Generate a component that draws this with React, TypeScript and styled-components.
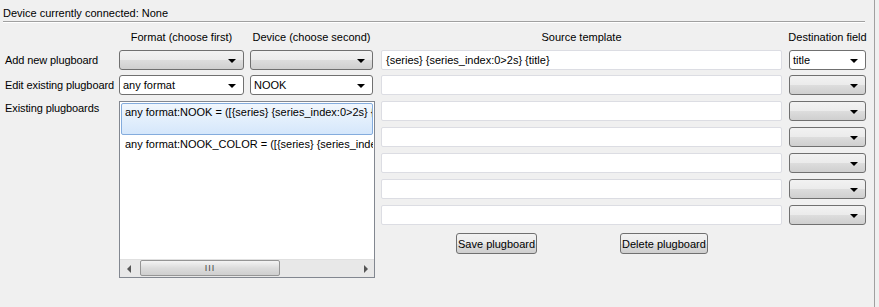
import styled, { createGlobalStyle } from "styled-components";

const GlobalStyle = createGlobalStyle`
  html, body {
    margin: 0;
    padding: 0;
    background: #f0f0f0;
  }
  body {
    font-family: "Liberation Sans", Arial, sans-serif;
    font-size: 11px;
    color: #000;
  }
`;

const Window = styled.div`
  width: 874px;
  height: 307px;
  border-right: 1px solid #a0a0a0;
  background: #f0f0f0;
  overflow: hidden;
`;

const Status = styled.div`
  padding: 6px 0 0 3px;
  height: 14px;
  line-height: 14px;
`;

const Rule = styled.div`
  margin: 1px 9px 0 3px;
  height: 0;
  border-top: 1px solid #a0a0a0;
  border-bottom: 1px solid #fff;
`;

const Grid = styled.div`
  display: grid;
  grid-template-columns: 114px 131px 131px 408px 77px;
  grid-template-rows: 23px 25px repeat(6, 26px) 28px;
  padding: 4px 0 0 5px;
`;

const Header = styled.div<{ $col: number }>`
  grid-column: ${(p) => p.$col};
  grid-row: 1;
  display: flex;
  align-items: center;
  justify-content: center;
  width: ${(p) => (p.$col === 4 ? 401 : p.$col === 2 ? 125 : p.$col === 3 ? 123 : 77)}px;
  padding-bottom: 4px;
  white-space: nowrap;
`;

const Label = styled.div<{ $row: number; $top?: boolean }>`
  grid-column: 1;
  grid-row: ${(p) => p.$row};
  line-height: ${(p) => (p.$top ? "14px" : "20px")};
  white-space: nowrap;
  letter-spacing: -0.1px;
`;

const Combo = styled.div<{ $w: number; $edit?: boolean }>`
  width: ${(p) => p.$w}px;
  height: 20px;
  box-sizing: border-box;
  border: 1px solid #707070;
  border-radius: 3px;
  background: ${(p) =>
    p.$edit ? "#fff" : "linear-gradient(#f2f2f2 0%, #ebebeb 50%, #dddddd 51%, #cfcfcf 100%)"};
  display: flex;
  align-items: center;
  padding-left: 3px;
  position: relative;
  &::after {
    content: "";
    position: absolute;
    right: 7px;
    top: 8px;
    border-left: 4px solid transparent;
    border-right: 4px solid transparent;
    border-top: 4px solid #000;
  }
`;

const Edit = styled.div`
  width: 401px;
  height: 20px;
  box-sizing: border-box;
  border: 1px solid #dcdde3;
  border-radius: 2px;
  background: #fff;
  display: flex;
  align-items: center;
  padding-left: 4px;
`;

const Cell = styled.div<{ $col: number; $row: number }>`
  grid-column: ${(p) => p.$col};
  grid-row: ${(p) => p.$row};
`;

const ListBox = styled.div`
  grid-column: 2 / span 2;
  grid-row: 4 / span 7;
  width: 256px;
  height: 177px;
  box-sizing: border-box;
  border: 1px solid #828790;
  background: #fff;
  display: flex;
  flex-direction: column;
`;

const Items = styled.div`
  flex: 1;
  padding: 1px;
  overflow: hidden;
`;

const Item = styled.div<{ $selected?: boolean }>`
  height: ${(p) => (p.$selected ? 32 : 18)}px;
  box-sizing: border-box;
  padding: ${(p) => (p.$selected ? "2px 3px" : "3px 4px")};
  white-space: nowrap;
  overflow: hidden;
  border: ${(p) => (p.$selected ? "1px solid #84acdd" : "none")};
  border-radius: 2px;
  background: ${(p) => (p.$selected ? "linear-gradient(#f1f7fd, #d5e7fb)" : "transparent")};
`;

const ScrollBar = styled.div`
  height: 17px;
  display: flex;
  align-items: stretch;
  background: #e8e8e8;
  border-top: 1px solid #e0e0e0;
`;

const Arrow = styled.div<{ $dir: "left" | "right" }>`
  width: 17px;
  display: flex;
  align-items: center;
  justify-content: center;
  &::before {
    content: "";
    border-top: 4px solid transparent;
    border-bottom: 4px solid transparent;
    ${(p) => (p.$dir === "left" ? "border-right: 4px solid #555;" : "border-left: 4px solid #555;")}
  }
`;

const Track = styled.div`
  flex: 1;
  display: flex;
  align-items: stretch;
  padding: 0 0 1px 3px;
`;

const Thumb = styled.div`
  width: 140px;
  box-sizing: border-box;
  border: 1px solid #959595;
  border-radius: 2px;
  background: linear-gradient(#f4f4f4, #dcdcdc 50%, #cfcfcf);
  display: flex;
  align-items: center;
  justify-content: center;
  font-size: 9px;
  letter-spacing: 1px;
  color: #444;
`;

const Buttons = styled.div`
  grid-column: 4;
  grid-row: 9;
  width: 401px;
  display: flex;
  padding: 2px 0 0 75px;
  gap: 83px;
`;

const Button = styled.button`
  height: 21px;
  box-sizing: border-box;
  padding: 0 1px;
  font: inherit;
  border: 1px solid #707070;
  border-radius: 3px;
  background: linear-gradient(#f2f2f2 0%, #ebebeb 50%, #dddddd 51%, #cfcfcf 100%);
  color: #000;
`;

const destinations = ["title", "", "", "", "", "", ""];

export default function App() {
  return (
    <Window>
      <GlobalStyle />
      <Status>Device currently connected: None</Status>
      <Rule />
      <Grid>
        <Header $col={2}>Format (choose first)</Header>
        <Header $col={3}>Device (choose second)</Header>
        <Header $col={4}>Source template</Header>
        <Header $col={5}>Destination field</Header>

        <Label $row={2}>Add new plugboard</Label>
        <Label $row={3}>Edit existing plugboard</Label>
        <Label $row={4} $top>Existing plugboards</Label>

        <Cell $col={2} $row={2}>
          <Combo $w={125} />
        </Cell>
        <Cell $col={3} $row={2}>
          <Combo $w={123} />
        </Cell>
        <Cell $col={2} $row={3}>
          <Combo $w={125} $edit>any format</Combo>
        </Cell>
        <Cell $col={3} $row={3}>
          <Combo $w={123} $edit>NOOK</Combo>
        </Cell>

        <ListBox>
          <Items>
            <Item $selected>any format:NOOK = ([{"{series}"} {"{series_index:0>2s}"} {"{title}"}])</Item>
            <Item>any format:NOOK_COLOR = ([{"{series}"} {"{series_index:0>2s}"} {"{title}"}])</Item>
          </Items>
          <ScrollBar>
            <Arrow $dir="left" />
            <Track>
              <Thumb>III</Thumb>
            </Track>
            <Arrow $dir="right" />
          </ScrollBar>
        </ListBox>

        {destinations.map((d, i) => (
          <Cell key={"s" + i} $col={4} $row={i + 2}>
            <Edit>{i === 0 ? "{series} {series_index:0>2s} {title}" : ""}</Edit>
          </Cell>
        ))}
        {destinations.map((d, i) => (
          <Cell key={"d" + i} $col={5} $row={i + 2}>
            <Combo $w={77} $edit={d !== ""}>{d}</Combo>
          </Cell>
        ))}

        <Buttons>
          <Button>Save plugboard</Button>
          <Button>Delete plugboard</Button>
        </Buttons>
      </Grid>
    </Window>
  );
}
